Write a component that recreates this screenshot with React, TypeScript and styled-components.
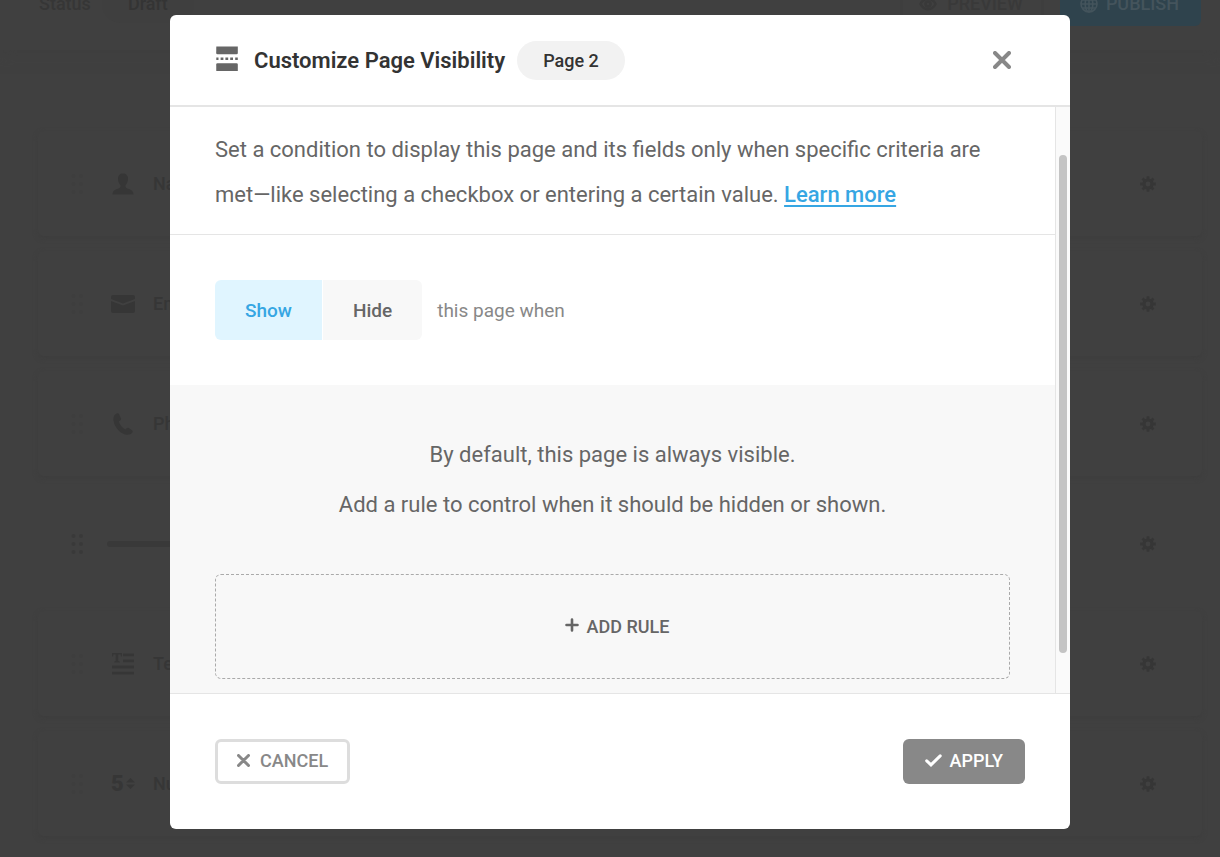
import React, { useState } from "react";
import styled, { createGlobalStyle } from "styled-components";

const GlobalStyle = createGlobalStyle`
  *, *::before, *::after { box-sizing: border-box; }
  html, body { margin: 0; padding: 0; }
  body {
    background: #404040;
    color: #666;
    font-family: Roboto, "Liberation Sans", sans-serif;
    font-size: 22px;
  }
  button { font-family: inherit; cursor: pointer; }
  svg { display: block; flex: none; }
`;

const Shell = styled.div`
  position: relative;
  min-height: 100vh;
`;

/* ---------- dimmed form builder ---------- */

const Builder = styled.div`
  position: absolute;
  inset: 0;
  overflow: hidden;
  color: #363636;
  background: #404040;
  font-size: 18px;
  font-weight: 500;
`;

const TopBar = styled.div`
  display: flex;
  align-items: center;
  height: 93px;
  margin-top: -43px;
  padding: 0 19px 0 39px;
  box-shadow: 0 0 16px #3e3e3e;
`;

const StatusPill = styled.span`
  margin-left: 11px;
  padding: 0 26px;
  line-height: 38px;
  border-radius: 19px;
  background: #3f3f3f;
  color: #343434;
`;

const TopActions = styled.div`
  display: flex;
  gap: 16px;
  margin-left: auto;
`;

const TopButton = styled.button<{ $primary?: boolean }>`
  display: flex;
  align-items: center;
  gap: ${(p) => (p.$primary ? 8 : 10)}px;
  height: 45px;
  padding: 0 ${(p) => (p.$primary ? 22 : 18)}px 0 ${(p) => (p.$primary ? 20 : 16)}px;
  border: ${(p) => (p.$primary ? "0" : "3px solid #3e3e3e")};
  border-radius: 6px;
  background: ${(p) => (p.$primary ? "#2f434d" : "transparent")};
  color: ${(p) => (p.$primary ? "#44545c" : "#393939")};
  font-size: 18px;
  font-weight: 500;
`;

const FieldList = styled.ul`
  display: flex;
  flex-direction: column;
  gap: 15px;
  list-style: none;
  margin: 0;
  padding: 81px 18px 0 38px;
`;

const FieldCard = styled.li<{ $plain?: boolean }>`
  display: flex;
  align-items: center;
  flex: none;
  height: 105px;
  padding: 0 46px 0 33px;
  border-radius: 6px;
  box-shadow: ${(p) => (p.$plain ? "none" : "0 2px 5px #3d3d3d")};
`;

const IconSlot = styled.span`
  display: flex;
  justify-content: center;
  width: 28px;
  margin: 0 16px 0 25px;
`;

const BreakLine = styled.span`
  flex: 1;
  height: 6px;
  margin: 0 90px 0 23px;
  border-radius: 3px;
  background: #393939;
`;

const GearButton = styled.button`
  margin-left: auto;
  padding: 0;
  border: 0;
  background: none;
  color: inherit;
`;

/* ---------- dialog ---------- */

const Overlay = styled.div`
  position: relative;
  padding: 15px 20px 28px 40px;
`;

const Dialog = styled.section`
  max-width: 900px;
  margin: 0 auto;
  border-radius: 6px;
  overflow: hidden;
  background: #fff;
`;

const DialogHeader = styled.header`
  display: flex;
  align-items: center;
  height: 92px;
  padding: 0 59px 0 45px;
  border-bottom: 2px solid #e5e5e5;
`;

const Title = styled.h1`
  margin: 0 12px 0 15px;
  padding-top: 2px;
  color: #333;
  font-size: 22px;
  line-height: 30px;
  font-weight: 600;
`;

const PagePill = styled.span`
  padding: 0 26px;
  border-radius: 20px;
  background: #f2f2f2;
  color: #333;
  font-size: 18px;
  line-height: 39px;
  font-weight: 500;
`;

const CloseButton = styled.button`
  margin-left: auto;
  padding: 0;
  border: 0;
  background: none;
  color: #888;
`;

const DialogBody = styled.div`
  display: flex;
`;

const Content = styled.div`
  flex: 1;
  min-width: 0;
`;

const ScrollTrack = styled.div`
  flex: none;
  width: 15px;
  padding: 48px 3px 40px;
  border-left: 1px solid #e5e5e5;
  background: #fafafa;
`;

const ScrollThumb = styled.div`
  width: 8px;
  height: 100%;
  border-radius: 4px;
  background: #c4c4c4;
`;

const Intro = styled.p`
  margin: 0;
  padding: 20px 45px 17px;
  border-bottom: 1px solid #e5e5e5;
  line-height: 45px;
`;

const LearnLink = styled.a`
  color: #36a6e3;
  font-weight: 500;
  text-decoration: underline;
  text-decoration-thickness: 2px;
  text-underline-offset: 3px;
`;

const ModeRow = styled.div`
  display: flex;
  align-items: center;
  gap: 15px;
  padding: 45px;
  color: #888;
  font-size: 19px;
`;

const Segmented = styled.div`
  display: flex;
  gap: 1px;
  border-radius: 6px;
  overflow: hidden;
`;

const Segment = styled.button<{ $active: boolean }>`
  height: 60px;
  padding: 0 30px;
  border: 0;
  background: ${(p) => (p.$active ? "#e0f5ff" : "#f8f8f8")};
  color: ${(p) => (p.$active ? "#36a6e3" : "#666")};
  font-size: 19px;
  font-weight: 500;
`;

const Rules = styled.div`
  padding: 45px 45px 14px;
  background: #f8f8f8;
  text-align: center;
`;

const RuleHint = styled.p`
  margin: 0;
  line-height: 50px;
`;

const AddRule = styled.button`
  display: flex;
  align-items: center;
  justify-content: center;
  gap: 8px;
  width: 100%;
  height: 105px;
  margin-top: 44px;
  padding: 0 0 0 9px;
  border: 1px dashed #aaa;
  border-radius: 6px;
  background: none;
  color: #666;
  font-size: 18px;
  font-weight: 500;
`;

const DialogFooter = styled.footer`
  display: flex;
  justify-content: space-between;
  padding: 45px;
  border-top: 1px solid #e5e5e5;
`;

const FooterButton = styled.button<{ $solid?: boolean }>`
  display: flex;
  align-items: center;
  gap: ${(p) => (p.$solid ? 8 : 10)}px;
  height: 45px;
  padding: 0 ${(p) => (p.$solid ? "22px 2px" : "19px 2px")};
  border: ${(p) => (p.$solid ? "0" : "3px solid #ddd")};
  border-radius: 6px;
  background: ${(p) => (p.$solid ? "#888" : "#fff")};
  color: ${(p) => (p.$solid ? "#fff" : "#888")};
  font-size: 18px;
  font-weight: 500;
`;

/* ---------- icons ---------- */

const CrossIcon = ({ size, stroke }: { size: number; stroke: number }) => (
  <svg width={size} height={size} viewBox={`0 0 ${size} ${size}`} stroke="currentColor" strokeWidth={stroke} strokeLinecap="round">
    <path d={`M${stroke / 2} ${stroke / 2}L${size - stroke / 2} ${size - stroke / 2}M${size - stroke / 2} ${stroke / 2}L${stroke / 2} ${size - stroke / 2}`} />
  </svg>
);

const PageBreakIcon = () => (
  <svg width="24" height="28" viewBox="0 0 24 28" fill="#666">
    <path d="M1.300.5h21.500v6.500a1.300 1.300 0 0 1-1.300 1.300h-19a1.300 1.300 0 0 1-1.300-1.300z" />
    <path d="M1.300 25h21.500v-6.500a1.300 1.300 0 0 0-1.300-1.300h-19a1.300 1.300 0 0 0-1.300 1.300z" />
    <path d="M1.300 11.500h2.200v2.500h-2.200zM5.600 11.500h2.800v2.500h-2.800zM10.400 11.500h2.800v2.500h-2.800zM15.200 11.500h2.800v2.500h-2.800zM20.200 11.500h2.600v2.500h-2.600z" />
  </svg>
);

const CheckIcon = () => (
  <svg width="17" height="13" viewBox="0 0 17 13" fill="none" stroke="currentColor" strokeWidth="3" strokeLinecap="round">
    <path d="M1.700 6.800L6 10.900L15.200 1.900" />
  </svg>
);

const PlusIcon = () => (
  <svg width="14" height="17" viewBox="0 0 14 17" fill="none" stroke="currentColor" strokeWidth="2.600" strokeLinecap="round">
    <path d="M7 1.500V12.500M1.500 7H12.500" />
  </svg>
);

const GripIcon = ({ color }: { color: string }) => (
  <svg width="13" height="22" viewBox="0 0 13 22" fill={color}>
    {[3, 11, 19].map((y) => (
      <g key={y}>
        <circle cx="2.500" cy={y} r="2" />
        <circle cx="10" cy={y} r="2" />
      </g>
    ))}
  </svg>
);

const GearIcon = () => (
  <svg width="16" height="16" viewBox="0 0 16 16" fill="none" stroke="currentColor">
    <circle cx="8" cy="8" r="4" strokeWidth="3.200" />
    <path
      strokeWidth="2.800"
      d="M8 .2V3M8 13V15.800M.2 8H3M13 8H15.800M2.500 2.500L4.500 4.500M11.500 11.500L13.500 13.500M2.500 13.500L4.500 11.500M11.500 4.500L13.500 2.500"
    />
  </svg>
);

const EyeIcon = () => (
  <svg width="18" height="14" viewBox="0 0 18 14" fill="none" stroke="currentColor">
    <path strokeWidth="2.500" d="M1.500 7C5 0 13 0 16.500 7C13 14 5 14 1.500 7Z" />
    <circle cx="9" cy="7" r="2.500" strokeWidth="2.500" />
  </svg>
);

const GlobeIcon = () => (
  <svg width="18" height="18" viewBox="0 0 18 18" fill="none" stroke="currentColor" strokeWidth="1.600">
    <circle cx="9" cy="9" r="8" />
    <ellipse cx="9" cy="9" rx="3.800" ry="8" />
    <path d="M1 9H17M2.200 5H15.800M2.200 13H15.800M9 1V17" />
  </svg>
);

const PersonIcon = () => (
  <svg width="22" height="22" viewBox="0 0 22 22" fill="currentColor">
    <path d="M11 .5c3 0 5 2 5 5.300 0 2.800-1 5.200-2.500 6.400-.3 1.800.3 2.600 2 3.200 3.500 1.100 6 2.200 6 6.100H.5c0-3.900 2.500-5 6-6.100 1.700-.6 2.300-1.400 2-3.200C7 11 6 8.600 6 5.800 6 2.500 8 .5 11 .5z" />
  </svg>
);

const MailIcon = () => (
  <svg width="24" height="18" viewBox="0 0 24 18" fill="currentColor">
    <path d="M2 0h20a2 2 0 0 1 2 2v2L12 8.500 0 4V2a2 2 0 0 1 2-2z" />
    <path d="M0 6l12 4.500L24 6v10a2 2 0 0 1-2 2H2a2 2 0 0 1-2-2z" />
  </svg>
);

const PhoneIcon = () => (
  <svg width="20" height="22" viewBox="0 0 20 22" fill="currentColor">
    <path d="M3.600.5C1 1.600 0 4.200.5 7.500c1 6.500 5.800 12.300 11.500 13.900 3.200.8 5.900.2 7.400-1.900.6-.9.400-1.700-.4-2.300l-3.200-2.200c-.8-.5-1.700-.4-2.300.3l-1.100 1.300C9.200 15 6.700 11.800 5.700 8.300l1.500-.8c.8-.4 1.100-1.200.8-2.100L6.200 1.500C5.700.5 4.700 0 3.600.5z" />
  </svg>
);

const TextIcon = () => (
  <svg width="22" height="22" viewBox="0 0 22 22" fill="currentColor">
    <path d="M0 0h10v3.500H9L8.500 1.500H6.300V8l1.400.5v1H2.300v-1L3.700 8V1.500H1.500L1 3.500H0z" />
    <path d="M11 .5h11v2.800H11zM11 6.500h11v2.800H11zM0 12.600h22v2.800H0zM0 18.800h22v2.800H0z" />
  </svg>
);

const NumberMark = styled.span`
  display: flex;
  align-items: center;
  gap: 2px;
  font-size: 22px;
  font-weight: 900;
`;

const NumberIcon = () => (
  <NumberMark>
    5
    <svg width="9" height="11" viewBox="0 0 9 11" fill="currentColor">
      <path d="M0 4.500L4.500 0L9 4.500zM0 6.500L4.500 11L9 6.500z" />
    </svg>
  </NumberMark>
);

/* ---------- page ---------- */

const fields = [
  { label: "Name", icon: <PersonIcon /> },
  { label: "Email", icon: <MailIcon /> },
  { label: "Phone", icon: <PhoneIcon /> },
  { label: "", icon: null },
  { label: "Text", icon: <TextIcon /> },
  { label: "Number", icon: <NumberIcon /> },
];

export default function App() {
  const [mode, setMode] = useState<"Show" | "Hide">("Show");

  return (
    <Shell>
      <GlobalStyle />
      <Builder aria-hidden="true" inert>
        <TopBar>
          <span>Status</span>
          <StatusPill>Draft</StatusPill>
          <TopActions>
            <TopButton type="button">
              <EyeIcon />
              PREVIEW
            </TopButton>
            <TopButton type="button" $primary>
              <GlobeIcon />
              PUBLISH
            </TopButton>
          </TopActions>
        </TopBar>
        <FieldList>
          {fields.map(({ label, icon }, i) => (
            <FieldCard key={i} $plain={!icon}>
              <GripIcon color={icon ? "#3e3e3e" : "#393939"} />
              {icon ? <IconSlot>{icon}</IconSlot> : <BreakLine />}
              {label}
              <GearButton type="button" aria-label="Field settings">
                <GearIcon />
              </GearButton>
            </FieldCard>
          ))}
        </FieldList>
      </Builder>

      <Overlay>
        <Dialog role="dialog" aria-modal="true" aria-labelledby="dialog-title">
          <DialogHeader>
            <PageBreakIcon />
            <Title id="dialog-title">Customize Page Visibility</Title>
            <PagePill>Page 2</PagePill>
            <CloseButton type="button" aria-label="Close">
              <CrossIcon size={18} stroke={4} />
            </CloseButton>
          </DialogHeader>

          <DialogBody>
            <Content>
              <Intro>
                Set a condition to display this page and its fields only when specific criteria are
                met—like selecting a checkbox or entering a certain value.{" "}
                <LearnLink href="#learn-more">Learn more</LearnLink>
              </Intro>
              <ModeRow>
                <Segmented role="group" aria-label="Visibility">
                  {(["Show", "Hide"] as const).map((name) => (
                    <Segment
                      key={name}
                      type="button"
                      aria-pressed={mode === name}
                      $active={mode === name}
                      onClick={() => setMode(name)}
                    >
                      {name}
                    </Segment>
                  ))}
                </Segmented>
                <span>this page when</span>
              </ModeRow>
              <Rules>
                <RuleHint>By default, this page is always visible.</RuleHint>
                <RuleHint>Add a rule to control when it should be hidden or shown.</RuleHint>
                <AddRule type="button">
                  <PlusIcon />
                  ADD RULE
                </AddRule>
              </Rules>
            </Content>
            <ScrollTrack>
              <ScrollThumb />
            </ScrollTrack>
          </DialogBody>

          <DialogFooter>
            <FooterButton type="button">
              <CrossIcon size={13} stroke={3} />
              CANCEL
            </FooterButton>
            <FooterButton type="button" $solid>
              <CheckIcon />
              APPLY
            </FooterButton>
          </DialogFooter>
        </Dialog>
      </Overlay>
    </Shell>
  );
}
